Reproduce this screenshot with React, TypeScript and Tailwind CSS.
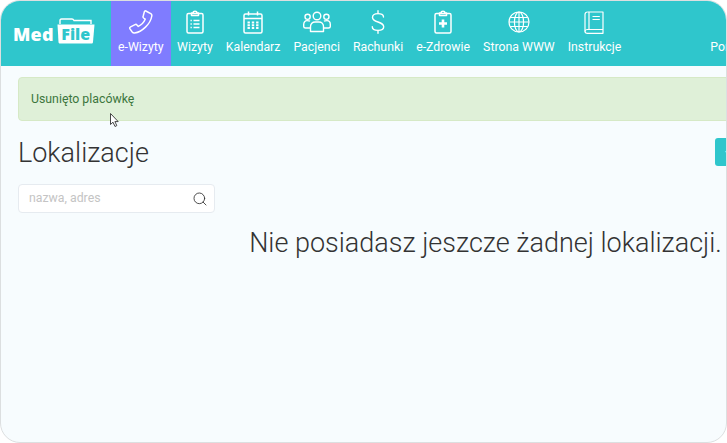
import { Search } from 'lucide-react';
import type { ReactNode } from 'react';

const PhoneIcon = (
  <svg width="24" height="24" viewBox="0 0 24 24" fill="none" stroke="currentColor" strokeWidth="1.5" strokeLinejoin="round">
    <path d="M16.8 1 L21.8 3.6 C22.6 4.1 23 5 22.8 6 C21.5 14 13 22 5.5 23 C4.5 23.1 3.8 22.8 3.2 22 L1 18.8 C0.6 18 0.8 17.2 1.6 16.8 L6 14.6 C6.8 14.2 7.5 14.4 8 15 L9.3 16.4 C12 15 15 12 16.2 9.2 L14.6 8 C14 7.4 13.9 6.7 14.2 6 L15.4 1.6 C15.7 0.9 16.2 0.7 16.8 1 Z" />
  </svg>
);

const ClipboardIcon = (
  <svg width="18" height="24" viewBox="0 0 18 24" fill="none" stroke="currentColor" strokeWidth="1.5">
    <rect x="1" y="3.5" width="16" height="19.5" rx="1.5" />
    <path d="M5.5 5.5V3H7.2C7.2 0.8 10.8 0.8 10.8 3H12.5V5.5Z" strokeLinejoin="round" />
    <path d="M4.5 10.5H5.8M7.5 10.5H13.5M4.5 14H5.8M7.5 14H13.5M4.5 17.5H5.8M7.5 17.5H13.5" strokeWidth="1.3" />
  </svg>
);

const CalendarIcon = (
  <svg width="20" height="23" viewBox="0 0 20 23" fill="none" stroke="currentColor" strokeWidth="1.5">
    <rect x="1" y="3" width="18" height="19" rx="1.5" />
    <path d="M1 7.5H19M5.5 0.5V4.5M14.5 0.5V4.5" />
    <path d="M4.5 11.5h2.4M8.8 11.5h2.4M13.1 11.5h2.4M4.5 14.2h2.4M8.8 14.2h2.4M13.1 14.2h2.4M4.5 16.9h2.4M8.8 16.9h2.4M13.1 16.9h2.4" strokeWidth="2" />
  </svg>
);

const PeopleIcon = (
  <svg width="28" height="22" viewBox="0 0 28 22" fill="none" stroke="currentColor" strokeWidth="1.4">
    <circle cx="14" cy="5" r="3.8" />
    <circle cx="4.6" cy="5.8" r="2.6" />
    <circle cx="23.4" cy="5.8" r="2.6" />
    <path d="M7.5 20.5V15.5C7.5 12.8 9.5 11 12 11H16C18.5 11 20.5 12.8 20.5 15.5V20.5Z" strokeLinejoin="round" />
    <path d="M7 10.2C6 9.6 5 9.6 4 9.6C2 9.6 0.7 11.2 0.7 13.5V15.5C0.7 16.5 1.5 17 2.5 17H7.4" />
    <path d="M21 10.2C22 9.6 23 9.6 24 9.6C26 9.6 27.3 11.2 27.3 13.5V15.5C27.3 16.5 26.5 17 25.5 17H20.6" />
  </svg>
);

const DollarIcon = (
  <svg width="14" height="24" viewBox="0 0 14 24" fill="none" stroke="currentColor" strokeWidth="1.4" strokeLinecap="round">
    <path d="M12.5 7C12.5 4.8 10.2 3.6 7 3.6C3.8 3.6 1.5 5 1.5 7.4C1.5 10 4 11 7 12C10 13 12.7 14 12.7 16.7C12.7 19 10.3 20.4 7 20.4C3.7 20.4 1.3 19 1.3 16.8" />
    <path d="M7 0.8V3.6M7 20.4V23.2" />
  </svg>
);

const HealthIcon = (
  <svg width="18" height="24" viewBox="0 0 18 24" fill="none" stroke="currentColor" strokeWidth="1.5">
    <rect x="1" y="3.5" width="16" height="19.5" rx="1.5" />
    <path d="M5.5 5.5V3H7.2C7.2 0.8 10.8 0.8 10.8 3H12.5V5.5Z" strokeLinejoin="round" />
    <path d="M9 9.5V17.5M5 13.5H13" strokeWidth="2.6" />
  </svg>
);

const GlobeIcon = (
  <svg width="22" height="22" viewBox="0 0 22 22" fill="none" stroke="currentColor" strokeWidth="1.2">
    <circle cx="11" cy="11" r="10" />
    <ellipse cx="11" cy="11" rx="4.6" ry="10" />
    <path d="M11 1V21M2.2 6.5H19.8M1 11H21M2.2 15.5H19.8" />
  </svg>
);

const BookIcon = (
  <svg width="20" height="23" viewBox="0 0 20 23" fill="none" stroke="currentColor" strokeWidth="1.2">
    <path d="M3.5 1H19V18.5H3.5C2 18.5 1 19.4 1 20.5C1 21.6 2 22.3 3.5 22.3H19V18.5" strokeLinejoin="round" />
    <path d="M1 20.5V3.5C1 2 2 1 3.5 1M5 1V18.5" />
    <path d="M8.5 5.5H15.8M8.5 8.5H15.8" />
  </svg>
);

const navItems: { label: string; icon?: ReactNode; active?: boolean; className?: string }[] = [
  { label: 'e-Wizyty', icon: PhoneIcon, active: true },
  { label: 'Wizyty', icon: ClipboardIcon },
  { label: 'Kalendarz', icon: CalendarIcon },
  { label: 'Pacjenci', icon: PeopleIcon },
  { label: 'Rachunki', icon: DollarIcon },
  { label: 'e-Zdrowie', icon: HealthIcon },
  { label: 'Strona WWW', icon: GlobeIcon },
  { label: 'Instrukcje', icon: BookIcon },
  { label: 'Pomoc', className: 'ml-[76px]' },
];

function Logo() {
  return (
    <div className="flex w-[110px] shrink-0 items-center pb-[6px] pl-[12px]">
      <span className="mt-[6px] font-['Open_Sans',sans-serif] text-[18px] leading-none font-extrabold tracking-[0.2px] text-white">Med</span>
      <div className="relative ml-[3px] flex h-[26px] w-[38px] items-end justify-center pb-[1px]">
        <svg className="absolute inset-0" width="38" height="26" viewBox="0 0 38 26" fill="none">
          <path d="M3 6V2.5C3 1.5 3.7 1 4.5 1H15C16 1 16.5 1.5 17 2.5H34 V6" stroke="#fff" strokeWidth="1.4" />
          <path d="M0.5 6.5H37.5L36 24C35.9 25 35.3 25.5 34.5 25.5H3C2.2 25.5 1.6 25 1.5 24Z" fill="#fff" />
        </svg>
        <span className="relative font-['Open_Sans',sans-serif] text-[16px] leading-[18px] font-extrabold text-[#2fc6cc]">File</span>
      </div>
    </div>
  );
}

export default function App() {
  return (
    <div className="h-[443px] w-[727px] bg-white font-['Roboto',sans-serif]">
      <div className="relative h-full w-full overflow-hidden rounded-[20px] border border-[#dcdfe0] bg-[#f7fcfe]">
        <header className="flex h-[65px] w-[1000px] items-stretch bg-[#2fc6cc]">
          <Logo />
          {navItems.map((item) => (
            <div
              key={item.label}
              className={`flex flex-col items-center text-white ${item.active ? 'bg-[#7f7cff] px-[7px]' : 'px-[6.5px]'} ${item.className ?? ''}`}
            >
              <div className="mt-[9px] flex h-[24px] items-center">{item.icon}</div>
              <span className="mt-auto mb-[12px] text-[12.3px] leading-[14px] whitespace-nowrap">{item.label}</span>
            </div>
          ))}
        </header>

        <main className="w-[969px] px-[17px] pt-[11px]">
          <div className="flex h-[44px] items-center rounded-[4px] border border-[#d6e9c6] bg-[#dff0d8] px-[12px] text-[12.3px] text-[#3c763d]">
            Usunięto placówkę
          </div>

          <div className="mt-[17px] flex h-[28px] items-center justify-between">
            <h1 className="mt-[3px] text-[27px] leading-[33px] font-light text-[#333]">Lokalizacje</h1>
            <button className="flex h-[28px] w-[238px] items-center rounded-[3px] bg-[#2fc6cc] px-[10px] text-[13px] text-white">
              + Dodaj lokalizację
            </button>
          </div>

          <div className="mt-[18px] flex h-[29px] w-[197px] items-center justify-between rounded-[4px] border border-[#e6ebf0] bg-white pr-[6px] pl-[10px]">
            <span className="text-[12.3px] text-[#c4c4c4]">nazwa, adres</span>
            <Search size={16} strokeWidth={1.3} className="text-[#333]" />
          </div>

          <p className="mt-[12px] text-center text-[27px] leading-[36px] font-light text-[#333]">
            Nie posiadasz jeszcze żadnej lokalizacji.
          </p>
        </main>

        {/* kursor myszy */}
        <svg className="absolute top-[112px] left-[109px]" width="10" height="15" viewBox="0 0 10 15">
          <path d="M0.5 0.5V11.5L3 9.2L5 13.5L6.8 12.6L4.9 8.6H8.2Z" fill="#fff" stroke="#333" strokeWidth="0.9" />
        </svg>
      </div>
    </div>
  );
}
